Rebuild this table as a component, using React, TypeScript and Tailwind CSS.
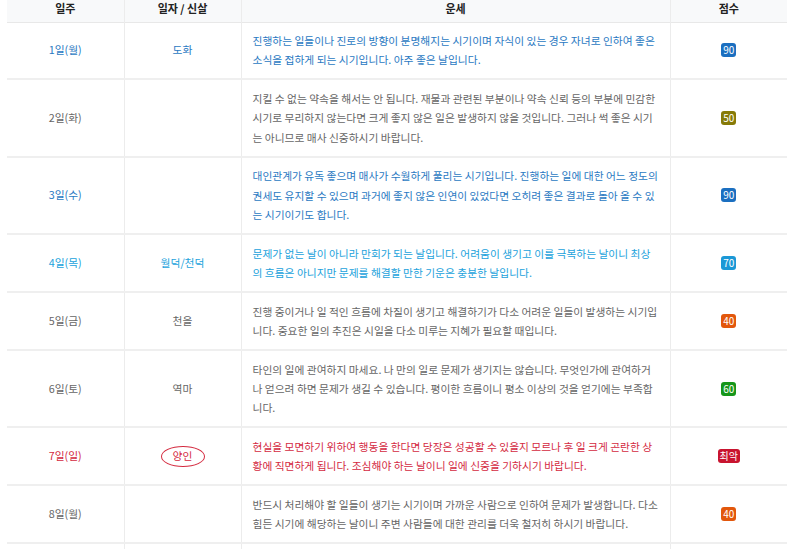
import React from 'react';

type Row = {
  day: string;
  sinsal: string;
  text: string;
  tone: 'blue' | 'sky' | 'gray' | 'red';
  score: string;
  badge: string;
  circled?: boolean;
};

const rows: Row[] = [
  {
    day: '1일(월)',
    sinsal: '도화',
    text: '진행하는 일들이나 진로의 방향이 분명해지는 시기이며 자식이 있는 경우 자녀로 인하여 좋은 소식을 접하게 되는 시기입니다. 아주 좋은 날입니다.',
    tone: 'blue',
    score: '90',
    badge: 'bg-[#1b6fc0]',
  },
  {
    day: '2일(화)',
    sinsal: '',
    text: '지킬 수 없는 약속을 해서는 안 됩니다. 재물과 관련된 부분이나 약속 신뢰 등의 부분에 민감한 시기로 무리하지 않는다면 크게 좋지 않은 일은 발생하지 않을 것입니다. 그러나 썩 좋은 시기는 아니므로 매사 신중하시기 바랍니다.',
    tone: 'gray',
    score: '50',
    badge: 'bg-[#867a08]',
  },
  {
    day: '3일(수)',
    sinsal: '',
    text: '대인관계가 유독 좋으며 매사가 수월하게 풀리는 시기입니다. 진행하는 일에 대한 어느 정도의 권세도 유지할 수 있으며 과거에 좋지 않은 인연이 있었다면 오히려 좋은 결과로 돌아 올 수 있는 시기이기도 합니다.',
    tone: 'blue',
    score: '90',
    badge: 'bg-[#1b6fc0]',
  },
  {
    day: '4일(목)',
    sinsal: '월덕/천덕',
    text: '문제가 없는 날이 아니라 만회가 되는 날입니다. 어려움이 생기고 이를 극복하는 날이니 최상의 흐름은 아니지만 문제를 해결할 만한 기운은 충분한 날입니다.',
    tone: 'sky',
    score: '70',
    badge: 'bg-[#1b98d6]',
  },
  {
    day: '5일(금)',
    sinsal: '천을',
    text: '진행 중이거나 일 적인 흐름에 차질이 생기고 해결하기가 다소 어려운 일들이 발생하는 시기입니다. 중요한 일의 추진은 시일을 다소 미루는 지혜가 필요할 때입니다.',
    tone: 'gray',
    score: '40',
    badge: 'bg-[#e2570c]',
  },
  {
    day: '6일(토)',
    sinsal: '역마',
    text: '타인의 일에 관여하지 마세요. 나 만의 일로 문제가 생기지는 않습니다. 무엇인가에 관여하거나 얻으려 하면 문제가 생길 수 있습니다. 평이한 흐름이니 평소 이상의 것을 얻기에는 부족합니다.',
    tone: 'gray',
    score: '60',
    badge: 'bg-[#16961a]',
  },
  {
    day: '7일(일)',
    sinsal: '양인',
    text: '현실을 모면하기 위하여 행동을 한다면 당장은 성공할 수 있을지 모르나 후 일 크게 곤란한 상황에 직면하게 됩니다. 조심해야 하는 날이니 일에 신중을 기하시기 바랍니다.',
    tone: 'red',
    score: '최악',
    badge: 'bg-[#c8142f]',
    circled: true,
  },
  {
    day: '8일(월)',
    sinsal: '',
    text: '반드시 처리해야 할 일들이 생기는 시기이며 가까운 사람으로 인하여 문제가 발생합니다. 다소 힘든 시기에 해당하는 날이니 주변 사람들에 대한 관리를 더욱 철저히 하시기 바랍니다.',
    tone: 'gray',
    score: '40',
    badge: 'bg-[#e2570c]',
  },
];

const toneClass = {
  blue: 'text-[#2a79c2]',
  sky: 'text-[#22a2dc]',
  gray: 'text-[#666666]',
  red: 'text-[#d42a3f]',
};

export default function App() {
  return (
    <div className="w-[800px] h-[549px] overflow-hidden bg-white font-['Noto_Sans_CJK_KR','Noto_Sans',sans-serif]">
      <table className="ml-[7px] w-[780px] table-fixed border-collapse text-[10.75px]">
        <colgroup>
          <col className="w-[117px]" />
          <col className="w-[117px]" />
          <col className="w-[429px]" />
          <col className="w-[117px]" />
        </colgroup>
        <thead>
          <tr className="h-[22px] bg-[#f8f9fa] border-b border-[#e8e8e8] text-[#222] font-bold text-[11px]">
            <th className="pb-[4px] border-r border-[#ececec] leading-none">일주</th>
            <th className="pb-[4px] border-r border-[#ececec] leading-none">일자 / 신살</th>
            <th className="pb-[4px] border-r border-[#ececec] leading-none">운세</th>
            <th className="pb-[4px] leading-none">점수</th>
          </tr>
        </thead>
        <tbody>
          {rows.map((r) => (
            <tr key={r.day} className={`border-b-2 border-[#efefef] ${toneClass[r.tone]}`}>
              <td className="text-center border-r border-[#ececec] align-middle">{r.day}</td>
              <td className="text-center border-r border-[#ececec] align-middle">
                {r.circled ? (
                  <span className="inline-flex items-center justify-center w-[44px] h-[21px] rounded-[50%] border-[1.5px] border-[#d42a3f]">
                    {r.sinsal}
                  </span>
                ) : (
                  r.sinsal
                )}
              </td>
              <td className="pl-[11px] pr-[10px] py-[8.7px] leading-[19.3px] border-r border-[#ececec] break-all">{r.text}</td>
              <td className="text-center align-middle">
                <span className={`inline-block px-[2px] h-[14px] leading-[14px] rounded-[3px] text-white text-[10px] ${r.badge}`}>
                  {r.score}
                </span>
              </td>
            </tr>
          ))}
          <tr className="h-[20px]">
            <td className="border-r border-[#ececec]"></td>
            <td className="border-r border-[#ececec]"></td>
            <td className="border-r border-[#ececec]"></td>
            <td></td>
          </tr>
        </tbody>
      </table>
    </div>
  );
}
